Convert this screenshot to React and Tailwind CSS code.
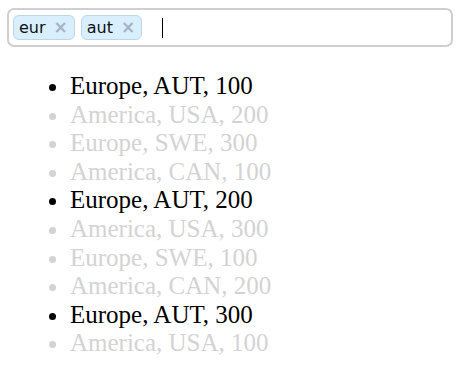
import React from 'react';

const rows = [
  { region: 'Europe', country: 'AUT', value: 100 },
  { region: 'America', country: 'USA', value: 200 },
  { region: 'Europe', country: 'SWE', value: 300 },
  { region: 'America', country: 'CAN', value: 100 },
  { region: 'Europe', country: 'AUT', value: 200 },
  { region: 'America', country: 'USA', value: 300 },
  { region: 'Europe', country: 'SWE', value: 100 },
  { region: 'America', country: 'CAN', value: 200 },
  { region: 'Europe', country: 'AUT', value: 300 },
  { region: 'America', country: 'USA', value: 100 },
];

const tags = ['eur', 'aut'];

const matches = (row) =>
  tags.every((t) => `${row.region} ${row.country}`.toLowerCase().includes(t));

const Tag = ({ label }) => (
  <span className="flex items-center h-[25px] pl-[5px] pr-[6px] gap-[8px] rounded-[6px] border border-[#bcd6ea] bg-[#d9effd] text-[16px] text-[#111]">
    {label}
    <span className="text-[17px] font-bold leading-none text-[#a3b2c6]">×</span>
  </span>
);

export default function App() {
  return (
    <div className="bg-white w-[466px] h-[366px] pt-[8px] pl-[7px]" style={{ fontFamily: '"DejaVu Sans", Verdana, sans-serif' }}>
      <div className="flex items-center gap-[6px] w-[446px] h-[39px] px-[4px] border-2 border-[#cfcfcf] rounded-[7px]">
        {tags.map((t) => (
          <Tag key={t} label={t} />
        ))}
        <span className="ml-[14px] w-px h-[20px] bg-black" />
      </div>
      <ul className="list-disc mt-[25px] ml-[23px] pl-10 text-[25px] leading-[28.6px]" style={{ fontFamily: '"Liberation Serif", "Times New Roman", serif' }}>
        {rows.map((r, i) => (
          <li key={i} className={matches(r) ? 'text-black' : 'text-[#d3d3d3]'}>
            {r.region}, {r.country}, {r.value}
          </li>
        ))}
      </ul>
    </div>
  );
}
